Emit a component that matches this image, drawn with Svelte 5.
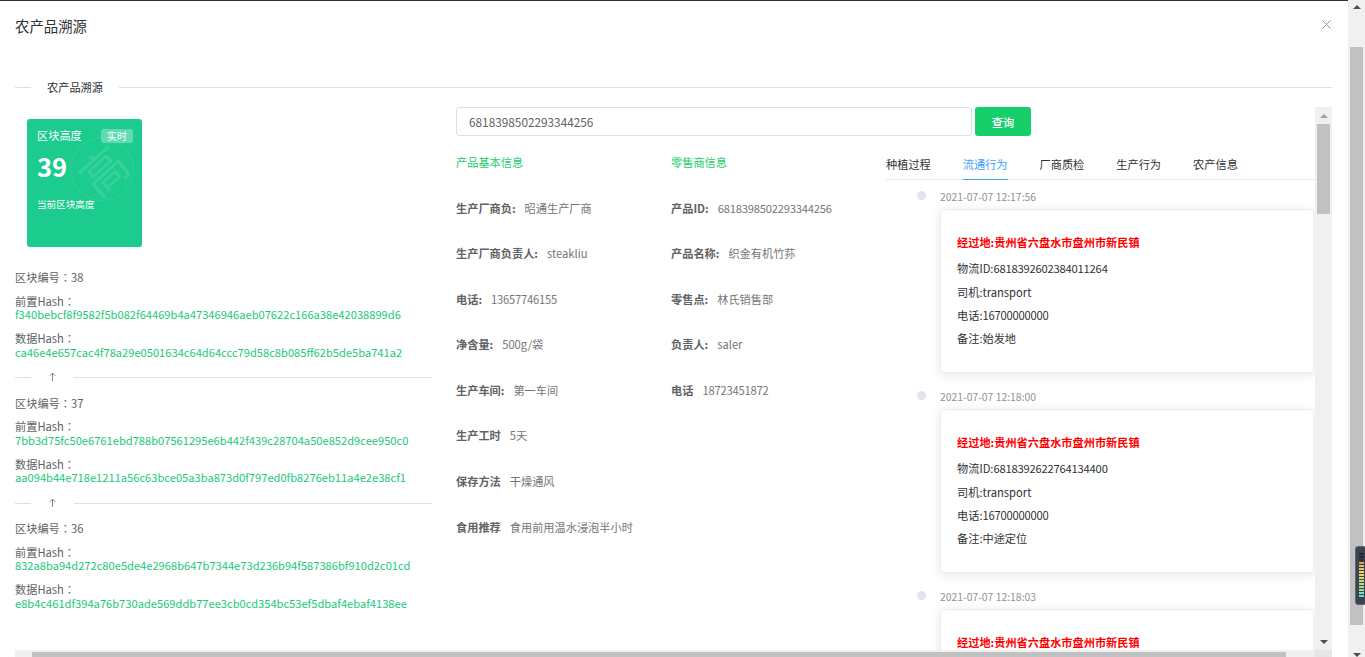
<script>
  const blocks = [
    { no: 38, prev: 'f340bebcf8f9582f5b082f64469b4a47346946aeb07622c166a38e42038899d6', data: 'ca46e4e657cac4f78a29e0501634c64d64ccc79d58c8b085ff62b5de5ba741a2' },
    { no: 37, prev: '7bb3d75fc50e6761ebd788b07561295e6b442f439c28704a50e852d9cee950c0', data: 'aa094b44e718e1211a56c63bce05a3ba873d0f797ed0fb8276eb11a4e2e38cf1' },
    { no: 36, prev: '832a8ba94d272c80e5de4e2968b647b7344e73d236b94f587386bf910d2c01cd', data: 'e8b4c461df394a76b730ade569ddb77ee3cb0cd354bc53ef5dbaf4ebaf4138ee' }
  ];
  const leftInfo = [
    ['生产厂商负:', '昭通生产厂商'], ['生产厂商负责人:', 'steakliu'], ['电话:', '13657746155', true], ['净含量:', '500g/袋'],
    ['生产车间:', '第一车间'], ['生产工时', '5天'], ['保存方法', '干燥通风'], ['食用推荐', '食用前用温水浸泡半小时']
  ];
  const rightInfo = [
    ['产品ID:', '6818398502293344256', true], ['产品名称:', '织金有机竹荪'], ['零售点:', '林氏销售部'], ['负责人:', 'saler'], ['电话', '18723451872', true]
  ];
  const tabs = ['种植过程', '流通行为', '厂商质检', '生产行为', '农产信息'];
  const events = [
    { time: '2021-07-07 12:17:56', id: '6818392602384011264', note: '始发地' },
    { time: '2021-07-07 12:18:00', id: '6818392622764134400', note: '中途定位' },
    { time: '2021-07-07 12:18:03' }
  ];
  const meter = ['#23272f', '#23272f', '#2b2f38', '#e09a5a', '#e8b45c', '#e8c45c', '#e8d45c', '#e4dc5c', '#d8e060', '#c8e070', '#b4e080', '#a0e090', '#8ce0a0', '#78e0b0', '#68dcc0'];
</script>

<div class="page">
  <div class="modal">
    <header class="head">
      <h1>农产品溯源</h1>
      <svg class="close" width="9" height="9" viewBox="0 0 9 9"><path d="M.5.5l8 8M8.5.5l-8 8" stroke="#909399" stroke-width="1" fill="none"/></svg>
    </header>
    <div class="legend"><i class="short"></i><span>农产品溯源</span><i class="long"></i></div>
    <div class="scroller">
      <div class="body">
        <section class="left">
          <div class="card">
            <div class="mark"><span>高</span></div>
            <div class="card-top"><span>区块高度</span><em>实时</em></div>
            <strong>39</strong>
            <p>当前区块高度</p>
          </div>
          {#each blocks as b, i}
            <div class="block">
              <div class="no">区块编号<span class="tc">：</span>{b.no}</div>
              <div class="lbl">前置Hash<span class="tc">：</span></div>
              <div class="hash">{b.prev}</div>
              <div class="lbl second">数据Hash<span class="tc">：</span></div>
              <div class="hash">{b.data}</div>
            </div>
            {#if i < 2}
              <div class="sep">
                <i class="short"></i>
                <svg class="arrow" width="7" height="9" viewBox="0 0 7 9"><path d="M3.5 9V1M.8 3.8L3.5 1l2.7 2.8" stroke="#a07f68" stroke-width="1" fill="none"/></svg>
                <i class="long"></i>
              </div>
            {/if}
          {/each}
        </section>
        <section class="mid">
          <div class="search">
            <div class="input">6818398502293344256</div>
            <button>查询</button>
          </div>
          <div class="info">
            <div class="col">
              <h2>产品基本信息</h2>
              {#each leftInfo as r}
                <div class="row"><b>{r[0]}</b><span class:num={r[2]}>{r[1]}</span></div>
              {/each}
            </div>
            <div class="col">
              <h2>零售商信息</h2>
              {#each rightInfo as r}
                <div class="row"><b>{r[0]}</b><span class:num={r[2]}>{r[1]}</span></div>
              {/each}
            </div>
          </div>
        </section>
        <section class="right">
          <nav class="tabs">
            {#each tabs as t, i}
              <span class:active={i === 1}>{t}</span>
            {/each}
          </nav>
          <div class="timeline">
            {#each events as e}
              <div class="event">
                <i class="dot"></i>
                <div class="event-main">
                  <div class="time">{e.time}</div>
                  <div class="ev-card">
                    <div class="place">经过地:贵州省六盘水市盘州市新民镇</div>
                    {#if e.id}
                      <div class="l1">物流ID:<span class="num">{e.id}</span></div>
                      <div class="l2">司机:transport</div>
                      <div class="l2">电话:<span class="num">16700000000</span></div>
                      <div class="l2">备注:{e.note}</div>
                    {/if}
                  </div>
                </div>
              </div>
            {/each}
          </div>
        </section>
        <div class="vbar">
          <i class="up"></i>
          <div class="vthumb"></div>
          <i class="down"></i>
        </div>
      </div>
      <div class="hbar">
        <i class="lft"></i>
        <div class="hthumb"></div>
        <i class="rgt"></i>
        <div class="corner"></div>
      </div>
    </div>
  </div>
  <aside class="outer">
    <i class="up dark"></i>
    <div class="othumb"></div>
    <i class="down dark"></i>
    <div class="widget">
      {#each meter as c}<i style="background:{c}"></i>{/each}
    </div>
  </aside>
</div>

<style>
  :global(body) { margin: 0; background: #fff; }
  * { box-sizing: border-box; }
  .page {
    width: 1365px; height: 657px; display: flex; overflow: hidden; background: #fff;
    font-family: "Noto Sans CJK SC", "Noto Sans", sans-serif; font-size: 11.2px; color: #606266;
  }
  .modal { width: 1348px; height: 657px; display: flex; flex-direction: column; border-top: 1px solid #2c3032; }
  .head { height: 53px; padding: 0 17px 0 15px; display: flex; justify-content: space-between; align-items: center; }
  h1 { margin: -2px 0 0; font-size: 14.4px; font-weight: 400; color: #303133; line-height: 1; }
  .close { margin-top: -7px; }
  .legend { height: 20px; margin: 23px 16px 0 15px; display: flex; align-items: center; color: #303133; flex: none; }
  .legend span { padding: 0 16px; }
  i.short { width: 16px; height: 1px; background: #dcdfe6; display: block; flex: none; }
  i.long { flex: 1; height: 1px; background: #dcdfe6; display: block; }
  .scroller { flex: 1; min-height: 0; margin: 10px 16px 0 15px; display: flex; flex-direction: column; }
  .body { height: 543px; display: flex; overflow: hidden; flex: none; }
  .left { width: 417px; margin-right: 24px; padding-top: 12px; flex: none; }
  .card {
    position: relative; width: 115px; height: 128px; margin: 0 0 24px 12px; padding: 5px 9px 0 10px;
    background: #1ccb8e; border-radius: 3px; color: #fff; overflow: hidden;
  }
  .card-top { display: flex; justify-content: space-between; align-items: center; height: 22px; position: relative; }
  .card-top em { font-style: normal; font-size: 10px; line-height: 14px; width: 32px; text-align: center; background: rgba(255, 255, 255, .3); border-radius: 3px; margin-top: 1px; }
  .card strong { display: block; font-size: 25.6px; line-height: 30px; margin-top: 5px; position: relative; font-weight: 700; }
  .card p { margin: 16px 0 0; font-size: 9.6px; line-height: 14px; position: relative; }
  .mark {
    position: absolute; left: 43px; top: 18px; width: 64px; height: 64px; border-radius: 50%;
    border: 1px solid rgba(255, 255, 255, .1); display: flex; align-items: center; justify-content: center;
  }
  .mark span { font-size: 46px; line-height: 1; color: rgba(255, 255, 255, .12); transform: rotate(-42deg); font-weight: 400; }
  .block { line-height: 13.5px; }
  .tc { font-family: "Noto Sans CJK TC", sans-serif; }
  .no { margin-bottom: 10px; }
  .lbl.second { margin-top: 10.5px; }
  .hash { color: #19c979; font-size: 11.13px; }
  .sep { display: flex; align-items: center; height: 20px; margin: 8.5px 0 9px; }
  .arrow { margin: -2px 18px 0 18px; flex: none; }
  .mid { width: 430px; flex: none; }
  .search { display: flex; gap: 3px; width: 575px; }
  .input { width: 516px; height: 29px; padding-left: 12px; border: 1px solid #dcdfe6; border-radius: 3px; font-size: 11.8px; line-height: 27px; color: #606266; }
  button { width: 56px; height: 29px; background: #17cf69; color: #fff; border: 0; border-radius: 3px; font: 500 11.2px "Noto Sans CJK SC", sans-serif; padding: 0; }
  .info { display: flex; margin-top: 19px; }
  .col { width: 215px; }
  h2 { margin: 0 0 30.5px; font-size: 11.2px; font-weight: 400; color: #17cf69; line-height: 14px; }
  .row { height: 45.6px; line-height: 16px; white-space: nowrap; }
  .row b { font-weight: 700; margin-right: 9px; color: #606266; }
  .row span { color: #747679; }
  .num { letter-spacing: -.2px; }
  .right { width: 429px; flex: none; overflow: hidden; position: relative; padding-top: 45px; }
  .tabs { display: flex; gap: 32px; height: 28px; border-bottom: 1px solid #e4e7ed; color: #303133; flex: none; }
  .tabs span { height: 28px; line-height: 24px; }
  .tabs .active { color: #409eff; border-bottom: 1px solid #409eff; }
  .timeline { padding-top: 10px; }
  .event { display: flex; height: 200px; }
  .dot { width: 9px; height: 9px; border-radius: 50%; background: #dfe4ed; margin: 1px 0 0 31px; flex: none; }
  .event-main { margin-left: 14px; width: 374px; flex: none; }
  .time { font-size: 10.4px; color: #909399; line-height: 14px; height: 19px; }
  .ev-card {
    height: 164px; padding: 24px 16px 0 16px; background: #fff; border: 1px solid #ebeef5; border-radius: 3px;
    box-shadow: 0 2px 12px rgba(0, 0, 0, .1); color: #303133; line-height: 16px;
  }
  .place { color: #f00; font-weight: 700; margin-bottom: 10px; }
  .l1 { margin-bottom: 8px; }
  .l2 { margin-bottom: 7px; }
  .vbar { width: 17px; height: 543px; background: #f0f0f0; flex: none; margin-left: auto; display: flex; flex-direction: column; align-items: center; padding-top: 7px; }
  .vthumb { width: 13px; height: 90px; background: #c1c1c1; margin-top: 6px; }
  .vbar .down { margin-top: auto; margin-bottom: 6px; }
  i.up { width: 0; height: 0; border: 4px solid transparent; border-top: 0; border-bottom: 4px solid #a3a3a3; display: block; flex: none; }
  i.down { width: 0; height: 0; border: 4px solid transparent; border-bottom: 0; border-top: 4px solid #505050; display: block; flex: none; }
  i.up.dark { border-bottom-color: #505050; }
  .hbar { height: 7px; display: flex; background: #f0f0f0; flex: none; align-items: flex-start; overflow: hidden; }
  .lft { width: 17px; flex: none; }
  .hthumb { width: 1254px; height: 7px; margin-top: 2px; background: #c1c1c1; flex: none; }
  .rgt { width: 29px; flex: none; }
  .corner { width: 17px; height: 7px; background: #e6e6e6; flex: none; }
  .outer { width: 17px; height: 657px; background: #f0f0f0; position: relative; display: flex; flex-direction: column; align-items: center; padding-top: 5px; overflow: hidden; }
  .othumb { width: 13px; height: 578px; background: #c1c1c1; margin-top: 38px; }
  .outer .down { margin-top: 28px; }
  .widget {
    position: absolute; left: 7px; top: 546px; width: 12px; height: 59px; padding: 6px 0 0 3px; background: #3c4452;
    border: 1px solid #5f6672; border-radius: 3px; display: flex; flex-direction: column; gap: 1px;
  }
  .widget i { display: block; width: 5px; height: 2px; flex: none; }
</style>
